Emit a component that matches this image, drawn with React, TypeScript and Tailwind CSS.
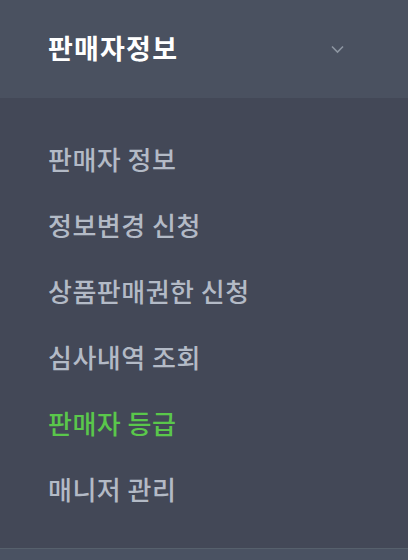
const items = [
  { label: "판매자 정보" },
  { label: "정보변경 신청" },
  { label: "상품판매권한 신청" },
  { label: "심사내역 조회" },
  { label: "판매자 등급", active: true },
  { label: "매니저 관리" },
];

export default function App() {
  return (
    <div
      className="w-[408px] h-[560px] flex flex-col bg-[#434857] overflow-hidden"
      style={{ fontFamily: '"Noto Sans CJK KR", "Noto Sans", sans-serif' }}
    >
      {/* Header */}
      <div className="h-[98px] shrink-0 flex items-center justify-between pl-[48px] pr-[63px] bg-[#4a5160]">
        <span className="text-[27px] font-bold text-white leading-[36px] tracking-[1.2px] -mt-[2px]">판매자정보</span>
        <svg width="15" height="9" viewBox="0 0 15 9" fill="none">
          <path d="M2 1.5 L7.5 7 L13 1.5" stroke="#8d95a1" strokeWidth="1.6" />
        </svg>
      </div>

      {/* Menu */}
      <ul className="flex flex-col pt-[28px] pl-[48px]">
        {items.map((it) => (
          <li
            key={it.label}
            className={
              "h-[66px] flex items-center text-[26px] font-medium leading-[34px] tracking-[0.5px] " +
              (it.active ? "text-[#5ac74b]" : "text-[#b3bac6]")
            }
          >
            {it.label}
          </li>
        ))}
      </ul>

      <div className="mt-auto h-[12px] bg-[#4a5262] border-t border-[#56606c]" />
    </div>
  );
}
